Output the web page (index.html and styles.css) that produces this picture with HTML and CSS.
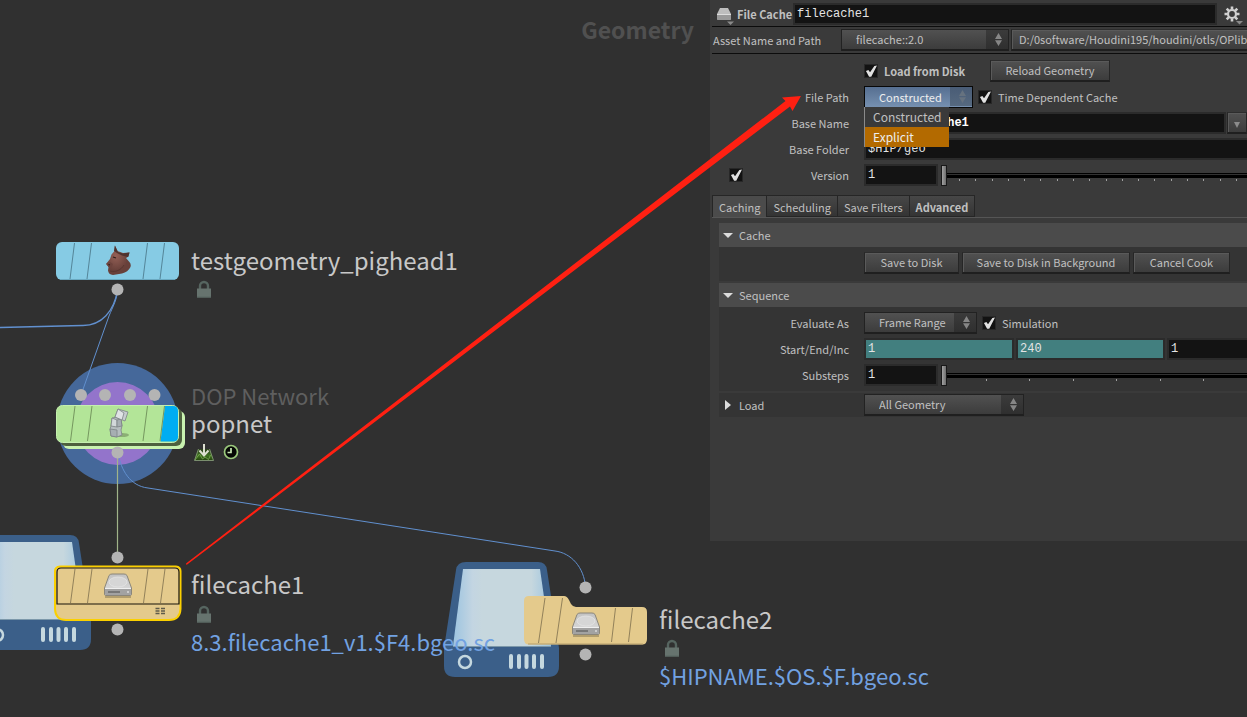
FILE: index.html
```html
<!DOCTYPE html>
<html lang="en">
<head>
<meta charset="utf-8">
<title>File Cache</title>
<link rel="stylesheet" href="styles.css">
</head>
<body>
<div class="app">
  <main class="network">
    <svg class="graph" width="710" height="717" viewBox="0 0 710 717" aria-hidden="true">
      <defs>
        <linearGradient id="glass">
          <stop offset="0" stop-color="#9cc4e0"/><stop offset=".2" stop-color="#c3d5e2"/>
          <stop offset=".3" stop-color="#c6d7de"/><stop offset=".8" stop-color="#c6d7de"/><stop offset="1" stop-color="#9cc4e0"/>
        </linearGradient>
        <linearGradient id="metal" x2="0" y2="1">
          <stop offset="0" stop-color="#c2c2c2"/><stop offset="1" stop-color="#e0e0e0"/>
        </linearGradient>
        <linearGradient id="hill" x2="0" y2="1">
          <stop offset="0" stop-color="#2c3f1c"/><stop offset=".6" stop-color="#3f7220"/><stop offset="1" stop-color="#23400f"/>
        </linearGradient>
        <radialGradient id="clay" cx=".4" cy=".35">
          <stop offset="0" stop-color="#946056"/><stop offset="1" stop-color="#68403a"/>
        </radialGradient>
        <g id="server">
          <path d="M466 562H538Q546 562 547 570L559 648V666Q559 677 548 677H455Q444 677 444 666V648L456 570Q457 562 466 562Z" fill="#3b5f89"/>
          <path d="M463 569H540L551 646H453Z" fill="url(#glass)"/>
          <path d="M453 646.500H551" stroke="#7c98aa"/>
          <circle cx="465" cy="662" r="6" fill="none" stroke="#c5d8df" stroke-width="2.500"/>
          <path d="M511 656V667M519 656V667M526.500 656V667M534 656V667M542 656V667" stroke="#c5d8df" stroke-width="4" stroke-linecap="round"/>
        </g>
        <g id="disk">
          <path d="M-13 12H13" stroke="#92815a" stroke-width="2" opacity=".6"/>
          <path d="M-9-9.500Q-8-11-6-11H6Q8-11 9-9.500L13.500 3V9Q13.500 10.500 12 10.500H-12Q-13.500 10.500-13.500 9V3Z" fill="url(#metal)" stroke="#8b867a"/>
          <ellipse cx="0" cy="-3" rx="9" ry="5" fill="#d6d6d6" stroke="#e6e6e6" stroke-width=".7"/>
          <path d="M-13 4H13V9Q13 10 12 10H-12Q-13 10-13 9Z" fill="#a2a2a2"/>
          <path d="M-10 7H2" stroke="#777" stroke-width="2"/>
          <path d="M-13 3.500H13" stroke="#efefef"/>
          <circle cx="10" cy="7" r="1" fill="#d8d8d8"/>
        </g>
        <g id="lock">
          <path d="M3 9V6a4 4 0 0 1 8 0V9" fill="none" stroke="#566560" stroke-width="2.400"/>
          <path d="M0 8.500H14V17.500H0Z" fill="#66736e"/>
          <path d="M0 17H14" stroke="#596863"/>
        </g>
      </defs>

      <use href="#server"/>
      <use href="#server" x="-468" y="-27"/>
      <circle cx="117.500" cy="423.500" r="60.500" fill="#45689a"/>
      <circle cx="117.500" cy="423.500" r="41.500" fill="#9374cb"/>

      <g fill="none" stroke="#6190cf" stroke-width="1.300">
        <path d="M117.500 290C114 311 102 326 82 325.500L0 327.500"/>
        <path d="M117.500 290C117 300 113 306 109 316L81 395" stroke-width="1"/>
        <path d="M118 453C121 470 130 486 148 488L555 551C571 553 584 567 585.500 587" stroke-width="1"/>
      </g>
      <path d="M117.500 453V557" stroke="#a0b489" stroke-width="1.200"/>

      <rect x="56" y="242" width="123" height="38" rx="6" fill="#86cbe4"/>
      <path d="M60 279.500H175" stroke="#6aa9c1"/>
      <path d="M74.500 243L70 279M91.500 243L87 279M147.500 243L143 279M164.500 243L160 279" stroke="#548598"/>
      <g>
        <path d="M115 245.500L117.500 251L123 253L129.500 252.500L128.500 256.500L126 258L129 261.500Q131.500 264 130.500 267Q128 272 122 273.500L113 275Q108.500 274.500 108 270.500L108.500 267L106 264L110 259L111.500 254.500L114.500 251Z" fill="url(#clay)"/>
        <path d="M114.800 245.500L118 252L123 253.500L129.500 252.500L128 257L122 255.500L117 253L114 251Z" fill="#4f332f"/>
        <path d="M106.500 263.500L110 262L113 264L111.500 267.500L108.500 267" fill="#6d433d"/>
        <path d="M110 271C116 272.500 121 270 124 265" fill="none" stroke="#57352f"/>
        <path d="M113 257L116 258M108.500 264.500L110 265" stroke="#301d1a" stroke-width="1.300"/>
      </g>

      <rect x="63" y="411" width="122" height="38" rx="6" fill="#c9f2b0"/>
      <rect x="60" y="408" width="122" height="38" rx="6" fill="#4d603e"/>
      <rect x="56.500" y="405.500" width="122" height="37" rx="6" fill="#b3e598" stroke="#c5f0af"/>
      <path d="M165 406H173Q178 406 178 411V437Q178 441 174 441.500H160.500Z" fill="#00adf2"/>
      <path d="M75 406L70.500 441M92 406L87.500 441M147.500 406L143 441M164.500 406L160 441" stroke="#75975f"/>
      <ellipse cx="122" cy="435" rx="7" ry="2" fill="#6f8b5c" opacity=".6"/>
      <g stroke="#7c8385" stroke-width=".8" stroke-linejoin="round">
        <path d="M112 418l5-1 4 2 1 7-1 4 1 5-5 2-6-1-1-7 1-3z" fill="#b5bdbf"/>
        <path d="M112 418l5 2v7l-6-1z" fill="#d2d8da"/>
        <path d="M117 420l4-1 1 7-5 1zM110 429l7 1v7l-6-1z" fill="#a6aeb2"/>
        <path d="M118 409l10 3-3 9-10-4z" fill="#c7cccf"/>
        <path d="M118 409l6 4-2 7-7-3z" fill="#e0e3e5"/>
      </g>

      <g fill="#b4b4b4">
        <circle cx="117.500" cy="289.500" r="6"/>
        <circle cx="81" cy="395" r="6"/><circle cx="105" cy="395" r="6"/><circle cx="130" cy="395" r="6"/><circle cx="154.500" cy="395" r="6"/>
        <circle cx="117.500" cy="452.500" r="6"/>
        <circle cx="117.500" cy="557.500" r="6"/><circle cx="117.500" cy="629.500" r="6"/>
        <circle cx="585.500" cy="587.500" r="6"/><circle cx="585.500" cy="654.500" r="6"/>
      </g>

      <path d="M60 566.500H176Q180.500 567 180.500 571V609Q180 620 169 620H66Q55.500 620 55 609V571Q55 567 60 566.500Z" fill="#e4ca8c" stroke="#fbd000" stroke-width="2"/>
      <path d="M57 604V572Q57 568 61 568H175Q179 568 179 572V604Z" fill="#e4ca8c" stroke="#171309" stroke-width="1.200"/>
      <path d="M75 569L70.500 603M92 569L87.500 603M148 569L143.500 603M165 569L160.500 603" stroke="#92815a"/>
      <path d="M155.500 608.500h4m1.500 0h4M155.500 611h4m1.500 0h4M155.500 613.500h4m1.500 0h4" stroke="#5f5b4a" stroke-width="1.600"/>
      <use href="#disk" x="118" y="585"/>

      <path d="M529 596H564Q567 596 569 600L571 604Q573 607 576 607H642Q647 607 647 612V639Q647 644.500 642 644.500H529Q524 644.500 524 639V601Q524 596 529 596Z" fill="#e4ca8c"/>
      <path d="M528 644H643" stroke="#b69f6c"/>
      <path d="M545 598L538.500 643M562.500 598L556 643M615.500 608L611.500 642M632.500 608L628.500 642" stroke="#92815a"/>
      <use href="#disk" x="586" y="624"/>

      <use href="#lock" x="197" y="280"/>
      <use href="#lock" x="197" y="605"/>
      <use href="#lock" x="665" y="639"/>
      <path d="M198 449H210L213.500 460.500H194.500Z" fill="url(#hill)"/>
      <path d="M198.500 449L194.500 460.500H213.500L209.500 449" fill="none" stroke="#8fa583" stroke-width=".8"/>
      <path d="M195 460L199.500 454L202.500 459L205 457L208.500 459.500L210.500 455" fill="none" stroke="#7eae55" stroke-width=".8"/>
      <path d="M204 444V455M199.500 450.500L204 455.500L208.500 450.500" fill="none" stroke="#dde0d0" stroke-width="2"/>
      <circle cx="231" cy="452" r="6.500" fill="#050705" stroke="#9bc97c" stroke-width="1.700"/>
      <path d="M231 448V452.500H227.500" fill="none" stroke="#c9e7b4" stroke-width="1.700"/>
    </svg>
    <div class="context">Geometry</div>
    <div class="node-label pighead">testgeometry_pighead1</div>
    <div class="node-label popnet"><span class="kind">DOP Network</span><span>popnet</span></div>
    <div class="node-label cache-one">filecache1</div>
    <div class="node-label file-one">8.3.filecache1_v1.$F4.bgeo.sc</div>
    <div class="node-label cache-two">filecache2</div>
    <div class="node-label file-two">$HIPNAME.$OS.$F.bgeo.sc</div>
  </main>

  <aside class="panel">
    <header class="title-bar">
      <svg class="title-icon" width="18" height="18" viewBox="0 0 18 18" aria-hidden="true">
        <path d="M4 1H12L15 7V11Q15 13 14 13H2Q1 13 1 11V7Z" fill="#bdbdbd"/>
        <path d="M1 8H15V11Q15 13 14 13H2Q1 13 1 11Z" fill="#9a9a9a"/><path d="M1 7.500H15" stroke="#ddd"/>
        <path d="M11 14.500H18L14.500 18Z" fill="#8a8a8a"/>
      </svg>
      <label class="strong" for="node-name">File Cache</label>
      <input class="field name-field" id="node-name" value="filecache1">
      <button class="gear" aria-label="Parameter options">
        <svg width="20" height="20" viewBox="0 0 20 20" aria-hidden="true">
          <circle cx="9" cy="9" r="4" fill="none" stroke="#d0d0d0" stroke-width="2.200"/>
          <path d="M9 1.500V4.500M9 13.500V16.500M1.500 9H4.500M13.500 9H16.500M3.700 3.700L5.900 5.900M12.100 12.100L14.300 14.300M3.700 14.300L5.900 12.100M12.100 5.900L14.300 3.700" stroke="#d0d0d0" stroke-width="2.600"/>
          <path d="M13 16H20L16.500 19.500Z" fill="#8a8a8a"/>
        </svg>
      </button>
    </header>
    <div class="asset-bar">
      <label for="asset">Asset Name and Path</label>
      <span class="combo asset-combo"><select id="asset"><option>filecache::2.0</option></select></span>
      <button class="button path-button">D:/0software/Houdini195/houdini/otls/OPlib</button>
    </div>

    <section class="params">
      <div class="row">
        <div class="cell">
          <input type="checkbox" class="check" id="load-disk" checked><label class="strong load-label" for="load-disk">Load from Disk</label>
          <button class="button reload">Reload Geometry</button>
        </div>
      </div>
      <div class="row">
        <label class="caption" for="file-path">File Path</label>
        <div class="cell">
          <span class="combo active path-combo"><select id="file-path"><option>Constructed</option><option>Explicit</option></select>
            <span class="menu" role="listbox" aria-label="File Path"><span class="item" role="option">Constructed</span><span class="item chosen" role="option">Explicit</span></span>
          </span>
          <input type="checkbox" class="check" id="time-dep" checked><label for="time-dep">Time Dependent Cache</label>
        </div>
      </div>
      <div class="row">
        <label class="caption" for="base-name">Base Name</label>
        <div class="cell joined">
          <input class="field grow bold" id="base-name" value="8.3.filecache1">
          <button class="button drop" aria-label="Base Name choices"><svg width="8" height="6" viewBox="0 0 8 6" aria-hidden="true"><path d="M1 0H7L4 6Z" fill="#8c8c8c"/></svg></button>
        </div>
      </div>
      <div class="row">
        <label class="caption" for="base-folder">Base Folder</label>
        <div class="cell bleed"><input class="field grow" id="base-folder" value="$HIP/geo"></div>
      </div>
      <div class="row">
        <div class="caption toggled"><input type="checkbox" class="check" aria-label="Enable Version" checked><label for="version">Version</label></div>
        <div class="cell tight">
          <input class="field short" id="version" value="1">
          <div class="slider"><input type="range" min="1" max="20" value="1" aria-label="Version slider"><div class="ticks fine"><i></i><i></i><i></i><i></i><i></i><i></i><i></i><i></i><i></i><i></i><i></i><i></i><i></i><i></i><i></i><i></i><i></i><i></i></div></div>
        </div>
      </div>
    </section>

    <nav class="tabs" role="tablist">
      <button class="tab current" role="tab" aria-selected="true">Caching</button>
      <button class="tab" role="tab">Scheduling</button>
      <button class="tab" role="tab">Save Filters</button>
      <button class="tab strong" role="tab">Advanced</button>
    </nav>

    <div class="groups">
      <section class="group">
        <button class="group-head"><svg width="10" height="10" viewBox="0 0 10 10" aria-hidden="true"><path d="M0 3H10L5 8Z" fill="#dcdcdc"/></svg>Cache</button>
        <div class="group-body">
          <div class="row"><div class="cell tight">
            <button class="button save">Save to Disk</button>
            <button class="button background">Save to Disk in Background</button>
            <button class="button cancel">Cancel Cook</button>
          </div></div>
        </div>
      </section>
      <section class="group">
        <button class="group-head"><svg width="10" height="10" viewBox="0 0 10 10" aria-hidden="true"><path d="M0 3H10L5 8Z" fill="#dcdcdc"/></svg>Sequence</button>
        <div class="group-body">
          <div class="row">
            <label class="caption" for="evaluate">Evaluate As</label>
            <div class="cell">
              <span class="combo frame-combo"><select id="evaluate"><option>Frame Range</option></select></span>
              <input type="checkbox" class="check" id="simulation" checked><label for="simulation">Simulation</label>
            </div>
          </div>
          <div class="row">
            <label class="caption" for="start">Start/End/Inc</label>
            <div class="cell bleed range">
              <input class="field teal" id="start" value="1">
              <input class="field teal" aria-label="End" value="240">
              <input class="field" aria-label="Increment" value="1">
            </div>
          </div>
          <div class="row">
            <label class="caption" for="substeps">Substeps</label>
            <div class="cell tight">
              <input class="field short" id="substeps" value="1">
              <div class="slider"><input type="range" min="1" max="8" value="1" aria-label="Substeps slider"><div class="ticks coarse"><i></i><i></i><i></i><i></i><i></i><i></i></div></div>
            </div>
          </div>
        </div>
      </section>
      <section class="group folded">
        <button class="group-head"><svg width="10" height="10" viewBox="0 0 10 10" aria-hidden="true"><path d="M2 0V10L8 5Z" fill="#dcdcdc"/></svg>Load</button>
        <span class="combo load-combo"><select aria-label="Load"><option>All Geometry</option></select></span>
      </section>
    </div>
  </aside>

  <svg class="pointer" width="810" height="717" viewBox="0 0 810 717" aria-hidden="true">
    <path d="M186 563.500L785.500 101L782 97.500L801 96L792.500 111L790 106.500L186.500 565Z" fill="#ff2012"/>
  </svg>
</div>
</body>
</html>
```

FILE: styles.css
```css
* { box-sizing: border-box; }

body {
  margin: 0;
  background: #303030;
  color: #c0c0c0;
  font: 11px/16px "Noto Sans CJK SC", "Open Sans", sans-serif;
}

button, select { font: inherit; color: inherit; }
button, input, select { margin: 0; border-radius: 0; }

.app {
  position: relative;
  display: flex;
  align-items: flex-start;
  min-height: 100vh;
  overflow: hidden;
}

/* Network view */
.network { position: relative; flex: none; }
.graph { display: block; }

.context {
  position: absolute;
  top: 13px;
  right: 16px;
  color: #505050;
  font-size: 23px;
  font-weight: 700;
  line-height: 32px;
}

.node-label {
  position: absolute;
  left: 191px;
  color: #c8c8c8;
  font-size: 24px;
  line-height: 27px;
  white-space: nowrap;
}
.node-label span { display: block; }
.node-label .kind { color: #5f5f5f; font-size: 22px; }
.pighead { top: 246px; }
.popnet { top: 382px; }
.cache-one { top: 570px; }
.file-one { top: 628px; }
.cache-two { top: 605px; left: 659px; }
.file-two { top: 662px; left: 659px; }
.file-one, .file-two { color: #72a2e2; font-size: 22px; }

.pointer { position: absolute; top: 0; left: 0; pointer-events: none; }

/* Parameter panel */
.panel {
  flex: 1;
  min-width: 0;
  padding-bottom: 124px;
  background: #3a3a3a;
  overflow: hidden;
}

.strong { font-weight: 700; }

.title-bar, .asset-bar {
  display: flex;
  align-items: center;
  height: 27px;
  margin-left: 2px;
  border-bottom: 1px solid #0c0c0c;
}
.title-bar { padding: 3px 2px 1px 4px; }
.title-icon { margin: 4px 3px 0 0; }
.name-field { flex: 1; margin-left: 1px; }
.gear { width: 28px; height: 22px; padding: 1px 0 0 6px; border: 0; background: none; }
.gear svg { display: block; }

.asset-bar { padding-left: 1px; }
.asset-bar label { width: 128px; }

.field {
  min-width: 0;
  height: 22px;
  padding: 0 2px;
  border: 2px solid #2b2b2b;
  background: #131313;
  color: #e4e4e4;
  font: 12px/16px "Liberation Mono", monospace;
}
.bold { font-weight: 700; color: #fff; }
.grow { flex: 1; }
.short { width: 74px; }
.teal { background: #427f7f; }

.button {
  height: 22px;
  padding: 0 2px 1px;
  border: 1px solid #262626;
  border-top-color: #2d2d2d;
  border-bottom: 2px solid #1f1f1f;
  background: linear-gradient(#515151, #3c3c3c);
  box-shadow: inset 1px 1px #5a5a5a;
}
.path-button {
  flex: 1;
  min-width: 0;
  margin-left: 2px;
  padding: 0 0 1px 7px;
  border-right: 0;
  overflow: hidden;
  text-align: left;
  white-space: nowrap;
}

.combo { position: relative; display: block; flex: none; height: 22px; }
.combo select {
  display: block;
  width: 100%;
  height: 22px;
  padding: 0 22px 1px 14px;
  border: 1px solid #222;
  border-bottom: 2px solid #1f1f1f;
  appearance: none;
  background: linear-gradient(#515151, #3c3c3c);
}
.combo::before {
  content: "";
  position: absolute;
  inset: 1px 1px 2px auto;
  width: 22px;
  background: linear-gradient(#3b3b3b, #2f2f2f);
  pointer-events: none;
}
.combo::after {
  content: "";
  position: absolute;
  top: 4px;
  right: 7px;
  width: 7px;
  height: 13px;
  background: #868686;
  clip-path: polygon(50% 0, 100% 46%, 0 46%, 0 56%, 100% 56%, 50% 100%, 0 56%, 0 46%);
  pointer-events: none;
}
.combo.active select { border: 1px solid #080808; background: linear-gradient(#566f91, #7690b0); color: #eee; }
.combo.active::before { background: linear-gradient(#495c76, #56697f); }
.combo.active::after { background: #66727f; }
.asset-combo { width: 168px; }
.path-combo, .frame-combo { margin-right: 5px; }
.path-combo { width: 109px; }
.frame-combo { width: 113px; }
.load-combo { width: 160px; }

.menu {
  position: absolute;
  z-index: 1;
  top: 21px;
  left: 0;
  width: 85px;
  border-left: 1px solid #8a8a8a;
  background: #3a3a3a;
  font-size: 12px;
  line-height: 20px;
}
.item { display: block; height: 20px; padding-left: 8px; }
.chosen { background: #b36a00; color: #eee; }

.check {
  flex: none;
  width: 14px;
  height: 14px;
  margin-right: 6px;
  border: 1px solid #272727;
  appearance: none;
  background: #121212;
}
.check:checked::before {
  content: "";
  display: block;
  width: 12px;
  height: 12px;
  background: #e0e0e0;
  clip-path: polygon(8% 50%, 28% 42%, 42% 60%, 78% 8%, 100% 4%, 52% 98%, 34% 98%);
}

.params { display: grid; gap: 4px; padding-top: 6px; }
.row { display: grid; grid-template-columns: 139px minmax(0, 1fr); column-gap: 15px; align-items: center; min-height: 22px; }
.caption { grid-column: 1; text-align: right; }
.cell { grid-column: 2; display: flex; align-items: center; }
.tight { gap: 3px; }
.joined { gap: 1px; }
.bleed { margin-right: -4px; }
.toggled { display: flex; align-items: center; justify-content: space-between; padding-left: 19px; }
.load-label { width: 106px; }
.reload { width: 120px; }
.drop { width: 20px; padding: 0; }

.slider { position: relative; flex: 1; height: 22px; }
.slider input {
  display: block;
  width: 100%;
  height: 22px;
  appearance: none;
  background: linear-gradient(#000, #000 1px, #333 1px, #333 2px, #000 2px) 0 9px / 100% 5px no-repeat;
}
.slider input::-webkit-slider-thumb {
  width: 6px;
  height: 21px;
  border: 1px solid #191919;
  appearance: none;
  background: linear-gradient(90deg, #a2a2a2, #6e6e6e);
}
.ticks { position: absolute; inset: 15px 0 auto; display: flex; justify-content: space-between; pointer-events: none; }
.ticks i { width: 1px; height: 2px; background: #a0a0a0; }
.fine { padding: 0 10px 0 18px; }
.coarse { padding: 0 43px 0 45px; }

.tabs { display: flex; margin: 9px 0 0 2px; border-bottom: 1px solid #555; }
.tab {
  height: 22px;
  padding: 1px 6px 0;
  border: 1px solid #262626;
  border-left-width: 0;
  background: linear-gradient(#474747, #343434);
}
.tab.current { border-left-width: 1px; border-bottom: 0; background: #4b4b4b; }

.groups { display: grid; gap: 2px; padding: 5px 0 0 9px; }
.group { background: #343434; }
.group-head {
  display: flex;
  align-items: center;
  gap: 6px;
  width: 100%;
  height: 24px;
  padding: 0 4px;
  border: 0;
  background: #4b4b4b;
}
.group-body { display: grid; gap: 4px; align-content: start; min-height: 34px; padding: 5px 0; }
.group .row { grid-template-columns: 130px minmax(0, 1fr); }
.save { width: 95px; }
.background { width: 168px; }
.cancel { width: 97px; }
.range { display: grid; grid-template-columns: 150px 149px 1fr; gap: 2px; }
.folded { display: flex; align-items: center; }
.folded .group-head { width: 145px; background: none; }
```
